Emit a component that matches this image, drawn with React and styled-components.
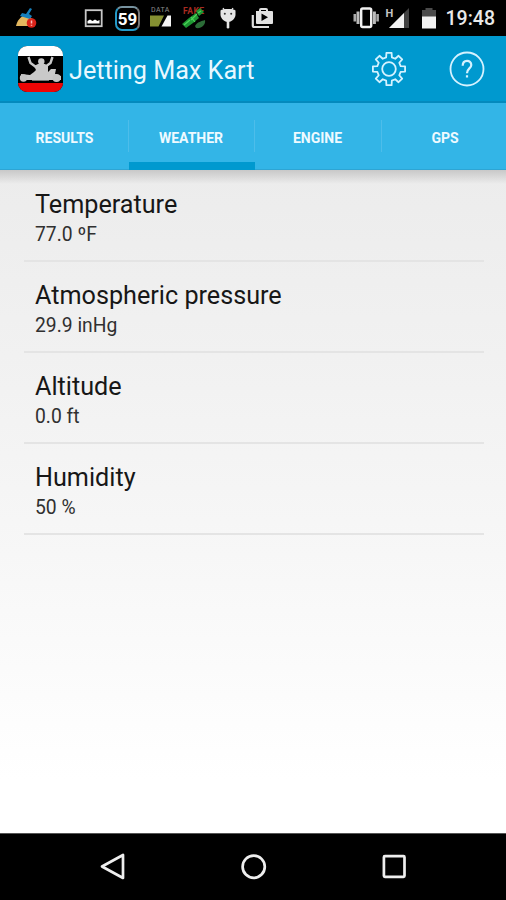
import React from "react";
import styled, { createGlobalStyle } from "styled-components";

const tabs = ["RESULTS", "WEATHER", "ENGINE", "GPS"];

const readings = [
  { name: "Temperature", value: "77.0 ºF" },
  { name: "Atmospheric pressure", value: "29.9 inHg" },
  { name: "Altitude", value: "0.0 ft" },
  { name: "Humidity", value: "50 %" },
];

// outline of an eight-toothed gear around 0,0
function gearPath() {
  const points = [];
  for (let i = 0; i < 8; i++) {
    const mid = (i * Math.PI) / 4;
    [
      [-0.24, 12],
      [-0.16, 16.3],
      [0.16, 16.3],
      [0.24, 12],
    ].forEach(([offset, r]) => {
      const x = r * Math.sin(mid + offset);
      const y = -r * Math.cos(mid + offset);
      points.push(`${x.toFixed(2)} ${y.toFixed(2)}`);
    });
  }
  return `M${points.join("L")}Z`;
}

function StatusIcons() {
  return (
    <StatusBar>
      <StatusIcon $left={16} width="22" height="22" viewBox="0 0 22 22">
        <path d="M0 19C1 14 4 10 9 8L17 12L18 19Z" fill="#e3b75f" />
        <path d="M4 9L6 6L10 7L14 1L16 2L13 7L16 9L14 12Z" fill="#1680bd" />
        <circle cx="15.5" cy="16" r="4.8" fill="#d92219" />
        <path d="M15.5 13.5V16.5M15.5 17.7V18.8" stroke="#fbb" strokeWidth="1.5" />
      </StatusIcon>
      <StatusIcon $left={46} width="20" height="20" viewBox="0 0 20 20">
        <rect x="1.7" y="2.2" width="16" height="16" fill="none" stroke="#c9c9c9" strokeWidth="1.8" />
        <path d="M3.5 15.5V13L6 11.5L8.5 13L11 11.5L13.5 13L15.5 12V15.5Z" fill="#fff" />
      </StatusIcon>
      <Counter>59</Counter>
      <DataIcon>
        <span>DATA</span>
        <svg width="22" height="12" viewBox="0 0 22 12">
          <path d="M0 0.5H14L8.5 11.5H0Z" fill="#859032" />
          <path d="M11.5 11.5L17.5 0.5H21V11.5Z" fill="#f4f4f4" />
        </svg>
      </DataIcon>
      <StatusIcon $left={10} width="26" height="26" viewBox="0 0 26 26">
        <text x="1" y="8.5" fill="#a92b20" fontSize="8.5" fontWeight="700" textLength="21">
          FAKE
        </text>
        <path d="M0 19L7 13L11 18L4 23ZM14 6L18 3L22 7L17 11ZM7 13L14 8L17 13L11 18Z" fill="#1f9633" />
        <path d="M2 20L8 15M9 15L15 9M16 8L19 6M9 12L13 17" stroke="#4bd659" strokeWidth="1.2" />
        <path d="M13 21C15 17 20 16 23 15C24 20 19 24 14 23Z" fill="#2b6c37" />
      </StatusIcon>
      <StatusIcon $left={11} width="20" height="24" viewBox="0 0 20 24">
        <path d="M4 2L6 5M14 2L12 5" stroke="#e5e5e5" strokeWidth="1.3" />
        <path d="M1.5 4.5C4 2.6 14 2.6 16.5 4.5V9C16 13 12.5 16 9 16S2 13 1.5 9Z" fill="#e5e5e5" />
        <rect x="7.7" y="14" width="2.6" height="8.5" rx="1.3" fill="#e5e5e5" />
        <circle cx="5.8" cy="7.8" r="1" fill="#333" />
        <circle cx="12.2" cy="7.8" r="1" fill="#333" />
      </StatusIcon>
      <StatusIcon $left={12} width="24" height="22" viewBox="0 0 24 22">
        <path d="M1.8 8V18.5Q1.8 20 3.3 20H18" fill="none" stroke="#dedede" strokeWidth="2.2" />
        <path
          d="M5 4H8V3Q8 1 10 1H15Q17 1 17 3V4H21Q22 4 22 5V16Q22 17 21 17H6Q5 17 5 16V4ZM10 4H15V3H10ZM10.5 6.5V14L17 10.3Z"
          fill="#e2e2e2"
          fillRule="evenodd"
        />
      </StatusIcon>
      <Spacer />
      <StatusIcon width="28" height="22" viewBox="0 0 28 22">
        <rect x="9.2" y="1.5" width="10" height="18.5" rx="1.5" fill="none" stroke="#f1f1f1" strokeWidth="2.4" />
        <path d="M6 4.5V17M22.4 4.5V17" stroke="#bcbcbc" strokeWidth="3" />
        <path d="M2.8 7V14.5M25.6 7V14.5" stroke="#ababab" strokeWidth="2.6" />
      </StatusIcon>
      <StatusIcon $left={5} width="25" height="24" viewBox="0 0 25 24">
        <path d="M24 2V22H4Z" fill="#424242" />
        <path d="M19 7V22H4Z" fill="#f2f2f2" />
        <text x="0.5" y="10.5" fill="#c4c4c4" fontSize="11" fontWeight="700">
          H
        </text>
      </StatusIcon>
      <StatusIcon $left={11} width="16" height="22" viewBox="0 0 16 22">
        <path d="M1 3H4.5V1H11.5V3H15V10H1Z" fill="#4b4b4b" />
        <path d="M1 9.5H15V21.5H1Z" fill="#f2f2f2" />
      </StatusIcon>
      <Clock>19:48</Clock>
    </StatusBar>
  );
}

function Logo() {
  return (
    <LogoBox>
      <svg width="45" height="46" viewBox="0 0 45 46">
        <path d="M0 0H45V10H0Z" fill="#fff" />
        <path d="M0 37H45V46H0Z" fill="#ed0505" />
        <path d="M10.5 11L12.5 17L18 21M34.5 11L32.5 17L27 21" fill="none" stroke="#c9c9c9" strokeWidth="2.4" />
        <circle cx="23.3" cy="15.5" r="3.2" fill="#c9c9c9" />
        <path
          d="M16 20L20 18H27L30 20L30 26L33 23H38L37 28L43 30V34H3V28L12 29L16 26L18 24Z"
          fill="#c9c9c9"
        />
        <circle cx="5.5" cy="32" r="3.7" fill="#c4c4c4" />
        <circle cx="38.5" cy="32" r="4" fill="#c4c4c4" />
        <path d="M14 34.5H31" stroke="#777" fill="none" />
      </svg>
    </LogoBox>
  );
}

export default function App() {
  return (
    <Screen>
      <GlobalStyle />
      <StatusIcons />
      <Toolbar>
        <Logo />
        <Title>Jetting Max Kart</Title>
        <ActionButton aria-label="Settings">
          <svg width="38" height="38" viewBox="-19 -19 38 38">
            <path d={gearPath()} />
            <circle r="6.8" />
          </svg>
        </ActionButton>
        <ActionButton aria-label="Help" $left={40}>
          <svg width="38" height="38" viewBox="-19 -19 38 38">
            <circle r="16.5" />
            <path
              d="M-4.3 -3.2C-4.3 -9.6 4.3 -9.6 4.3 -4C4.3 -0.6 0 -0.4 0 4.2M0 6.3V8.6"
              strokeWidth="2.2"
            />
          </svg>
        </ActionButton>
      </Toolbar>
      <TabBar>
        {tabs.map((tab) => (
          <Tab key={tab} $active={tab === "WEATHER"}>
            {tab}
          </Tab>
        ))}
      </TabBar>
      <Content>
        {readings.map((item) => (
          <Row key={item.name}>
            <Name>{item.name}</Name>
            <Value>{item.value}</Value>
          </Row>
        ))}
      </Content>
      <NavBar>
        <svg width="28" height="30" viewBox="0 0 28 30">
          <path d="M3 14.5L24 3V26Z" />
        </svg>
        <svg width="28" height="30" viewBox="0 0 28 30">
          <circle cx="13.7" cy="14.7" r="11.1" />
        </svg>
        <svg width="28" height="30" viewBox="0 0 28 30">
          <rect x="3.9" y="4.2" width="20.6" height="20.6" rx="1" />
        </svg>
      </NavBar>
    </Screen>
  );
}

const GlobalStyle = createGlobalStyle`
  * {
    box-sizing: border-box;
  }

  body {
    margin: 0;
    font-family: Roboto, sans-serif;
  }
`;

const Screen = styled.div`
  display: flex;
  flex-direction: column;
  width: 506px;
  height: 900px;
  overflow: hidden;
`;

const StatusBar = styled.div`
  display: flex;
  align-items: center;
  height: 36px;
  padding-right: 11px;
  background: #000;
`;

const StatusIcon = styled.svg`
  flex: none;
  margin-left: ${(props) => props.$left || 0}px;
`;

const Counter = styled.div`
  width: 25px;
  height: 25px;
  margin-left: 11px;
  border: 2px solid #249ac9;
  border-top-color: #77929f;
  border-right-color: #777;
  border-radius: 7px;
  color: #fff;
  font-size: 17px;
  font-weight: 700;
  line-height: 22px;
  text-align: center;
`;

const DataIcon = styled.div`
  display: flex;
  flex-direction: column;
  width: 22px;
  height: 20px;
  margin-left: 10px;

  span {
    height: 7px;
    padding-left: 1px;
    color: #8c8c8c;
    font-size: 7px;
    line-height: 5px;
    letter-spacing: 0.4px;
  }
`;

const Spacer = styled.div`
  flex: 1;
`;

const Clock = styled.div`
  margin-left: 9px;
  color: #e9e9e9;
  font-size: 19.5px;
  font-weight: 500;
  line-height: 36px;
  padding-top: 2px;
`;

const Toolbar = styled.header`
  display: flex;
  align-items: center;
  height: 67px;
  padding: 1px 20px 0 18px;
  background: #0099cf;
  border-bottom: 2px solid #048abd;
`;

const LogoBox = styled.div`
  width: 45px;
  height: 46px;
  overflow: hidden;
  border-radius: 9px;
  background: #000;
`;

const Title = styled.h1`
  flex: 1;
  margin: 3px 0 0 6px;
  color: #e9f8ff;
  font-size: 25.2px;
  font-weight: 400;
`;

const ActionButton = styled.button`
  display: flex;
  margin-left: ${(props) => props.$left || 0}px;
  padding: 0;
  border: 0;
  background: none;

  svg {
    fill: none;
    stroke: #d5f2ff;
    stroke-width: 1.8;
    stroke-linejoin: round;
  }
`;

const TabBar = styled.nav`
  display: grid;
  grid-template-columns: 129px 126px 127px 1fr;
  flex: none;
  height: 67px;
  background: #33b5e7;
`;

const Tab = styled.div`
  display: flex;
  align-items: center;
  justify-content: center;
  color: #effaff;
  font-size: 14px;
  font-weight: 700;
  padding: 2px 2px 0 0;
  background: linear-gradient(#4dbdea, #4dbdea) right 17px / 1px 32px no-repeat;
  box-shadow: ${(props) => (props.$active ? "inset 0 -8px #0099cf" : "inset 0 -1px #2ea5d4")};

  &:first-child {
    padding-right: 0;
  }

  &:last-child {
    padding: 2px 0 0 2px;
    background: none;
  }
`;

const Content = styled.main`
  flex: 1;
  padding: 1px 22px 0 24px;
  background:
    linear-gradient(#c8c8c8, rgba(225, 225, 225, 0)) top / 100% 14px no-repeat,
    linear-gradient(#ececec, #f1f1f1 28%, #f7f7f7 58%, #fff 92%);
`;

const Row = styled.div`
  height: 91px;
  padding: 18px 11px 0;
  border-bottom: 2px solid #e4e4e4;
  color: #171717;
`;

const Name = styled.div`
  font-size: 25.2px;
  line-height: 31px;
`;

const Value = styled.div`
  color: #303030;
  font-size: 19.3px;
  line-height: 29px;
`;

const NavBar = styled.footer`
  display: flex;
  align-items: center;
  justify-content: space-between;
  height: 67px;
  padding: 0 98px 0 99px;
  border-top: 1px solid #555;
  background: #000;

  svg {
    fill: none;
    stroke: #eee;
    stroke-width: 2.7;
    stroke-linejoin: round;
  }
`;
